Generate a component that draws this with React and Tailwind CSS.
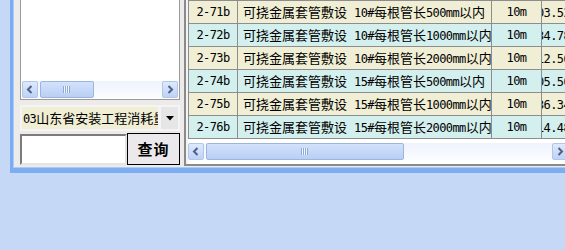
function Arrow({ dir }) {
  return (
    <svg width="8" height="9" viewBox="0 0 8 9" className="block">
      {dir === 'left' ? (
        <path d="M5.5 1 L2 4.5 L5.5 8" fill="none" stroke="#4d6185" strokeWidth="2" />
      ) : (
        <path d="M2.5 1 L6 4.5 L2.5 8" fill="none" stroke="#4d6185" strokeWidth="2" />
      )}
    </svg>
  );
}

function SBtn({ dir }) {
  return (
    <div className="w-[16px] h-[17px] shrink-0 flex items-center justify-center rounded-[2px] border border-[#b3c6ea] bg-gradient-to-b from-[#dde9fd] to-[#bfd3f6]">
      <Arrow dir={dir} />
    </div>
  );
}

function Grip() {
  return (
    <svg width="8" height="7" viewBox="0 0 8 7" className="block">
      <rect x="0" y="0" width="1" height="7" fill="#8ea9d8" />
      <rect x="2" y="0" width="1" height="7" fill="#8ea9d8" />
      <rect x="4" y="0" width="1" height="7" fill="#8ea9d8" />
      <rect x="6" y="0" width="1" height="7" fill="#8ea9d8" />
      <rect x="1" y="0" width="1" height="7" fill="#f2f6fe" />
      <rect x="3" y="0" width="1" height="7" fill="#f2f6fe" />
      <rect x="5" y="0" width="1" height="7" fill="#f2f6fe" />
    </svg>
  );
}

function HScroll({ thumb }) {
  return (
    <div className="h-[17px] flex items-stretch bg-gradient-to-b from-[#eef3fc] to-[#fbfcff]">
      <SBtn dir="left" />
      <div
        className="ml-[2px] shrink-0 h-[17px] rounded-[2px] border border-[#9cb5df] bg-gradient-to-b from-[#d3e2fb] to-[#b9cff4] flex items-center justify-center"
        style={{ width: thumb }}
      >
        <Grip />
      </div>
      <div className="flex-1" />
      <SBtn dir="right" />
    </div>
  );
}

// Split text into runs: ASCII runs use a narrow mono face (like SimSun half-width)
function T({ text }) {
  const parts = text.split(/([\x20-\x7e]+)/).filter((p) => p.length);
  return (
    <>
      {parts.map((p, i) =>
        /^[\x20-\x7e]+$/.test(p) ? (
          <span key={i} className="font-['DejaVu_Sans_Mono',monospace] text-[12px] tracking-[-0.6px] whitespace-pre">
            {p}
          </span>
        ) : (
          <span key={i}>{p}</span>
        )
      )}
    </>
  );
}

const rows = [
  ['2-71b', '10#每根管长500mm以内', '03.52', 'bg-[#f0eed4]'],
  ['2-72b', '10#每根管长1000mm以内', '34.78', 'bg-[#d3efee]'],
  ['2-73b', '10#每根管长2000mm以内', '12.56', 'bg-[#f0eed4]'],
  ['2-74b', '15#每根管长500mm以内', '05.50', 'bg-[#d3efee]'],
  ['2-75b', '15#每根管长1000mm以内', '36.34', 'bg-[#f0eed4]'],
  ['2-76b', '15#每根管长2000mm以内', '14.48', 'bg-[#d3efee]'],
];

export default function App() {
  return (
    <div className="w-[565px] h-[250px] overflow-hidden bg-[#c5d9f7] text-black font-['Noto_Sans_CJK_SC',sans-serif]">
      <div className="ml-[10px] w-[558px] h-[173px] border-l-[3px] border-b-[5px] border-[#7dadf0]">
        <div className="h-full border-l border-b border-[#a9cbf8] bg-[#ecebea] flex">
          {/* left panel */}
          <div className="w-[170px] shrink-0 pl-[6px] pr-[4px] flex flex-col">
            <div className="h-[100px] bg-white border-l border-r border-b border-[#9a9a9a] flex flex-col">
              <div className="flex-1" />
              <div className="px-[1px] pb-[1px]">
                <HScroll thumb={54} />
              </div>
            </div>
            <div className="mt-[5px] h-[26px] flex items-stretch p-[2px] bg-[#f4f4f4]">
              <div className="flex-1 bg-[#f0eed4] overflow-hidden whitespace-nowrap text-[13px] leading-[22px] pl-[1px]">
                <T text="03山东省安装工程消耗量定额" />
              </div>
              <div className="w-[17px] ml-[3px] bg-[#e6e6e6] flex items-center justify-center">
                <svg width="8" height="5" viewBox="0 0 8 5" className="block">
                  <path d="M0 0 H8 L4 4.5 Z" fill="#000" />
                </svg>
              </div>
            </div>
            <div className="mt-[2px] flex h-[32px]">
              <div className="w-[107px] mt-[1px] h-[31px] bg-white border-2 border-t-[#7c7c7c] border-l-[#7c7c7c] border-r-[#e4e4e4] border-b-[#e4e4e4]" />
              <div className="flex-1 h-[32px] border border-black bg-[#ebe9ec] flex items-center justify-center text-[15px] font-bold tracking-[1px]">
                查询
              </div>
            </div>
          </div>
          {/* right panel */}
          <div className="flex-1 min-w-0 overflow-hidden h-[166px] border-l-2 border-b-2 border-[#8a8a8a] pl-[2px] bg-[#f3f3f3] flex flex-col">
            <div className="bg-white flex flex-col flex-1 min-w-0">
              <div className="border-t border-l border-[#8d8d8d] text-[13px] overflow-hidden">
                {rows.map((r) => (
                  <div key={r[0]} className={`flex h-[23px] border-b border-[#8d8d8d] ${r[3]}`}>
                    <div className="w-[49px] shrink-0 border-r border-[#8d8d8d] flex items-center justify-center">
                      <T text={r[0]} />
                    </div>
                    <div className="w-[254px] shrink-0 border-r border-[#8d8d8d] flex items-center pl-[5px] overflow-hidden whitespace-nowrap">
                      <span>可挠金属套管敷设</span>
                      <span className="ml-[7px]">
                        <T text={r[1]} />
                      </span>
                    </div>
                    <div className="w-[50px] shrink-0 border-r border-[#8d8d8d] flex items-center justify-center">
                      <T text="10m" />
                    </div>
                    <div className="w-[60px] shrink-0 flex items-center overflow-hidden whitespace-nowrap">
                      <span className="-ml-[5px]">
                        <T text={r[2]} />
                      </span>
                    </div>
                  </div>
                ))}
              </div>
              <div className="h-[4px]" />
              <HScroll thumb={198} />
              <div className="flex-1" />
            </div>
          </div>
        </div>
      </div>
    </div>
  );
}
